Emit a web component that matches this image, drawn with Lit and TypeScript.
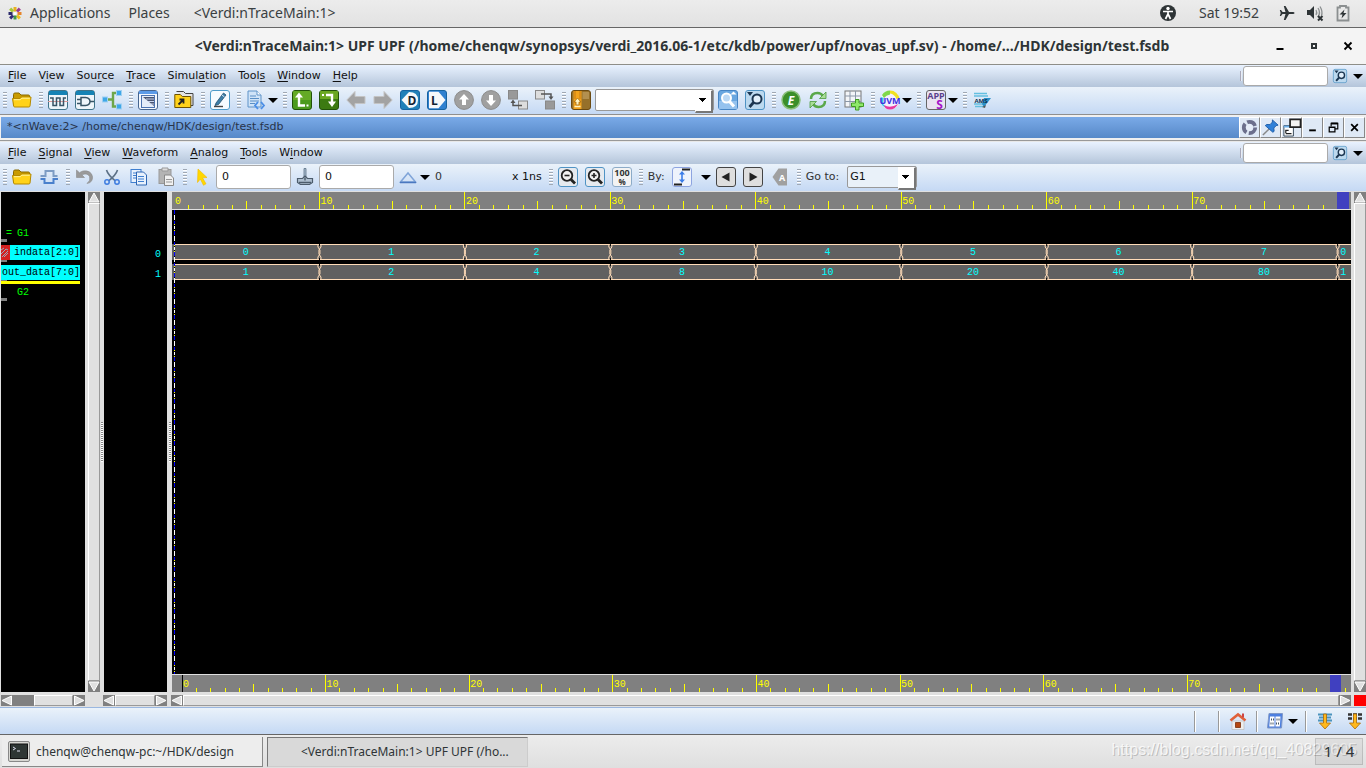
import { LitElement, html, svg, css, nothing, SVGTemplateResult, TemplateResult } from "lit";
import { customElement, property } from "lit/decorators.js";

const tile = (fill: string, stroke: string) =>
  svg`<rect x="0.5" y="0.5" width="19" height="19" rx="2.5" fill=${fill} stroke=${stroke}/>`;

const ICONS: Record<string, SVGTemplateResult> = {
  folder: svg`<path d="M1.5 4.5q0-1.5 1.5-1.5h4l2 2h7.500q1 0 1 1v9h-16z" fill="#c99b00" stroke="#8a6a00"/><path d="M.5 8.500h7.500l1.500-1.500h9.500l-1 9q-.2 1-1.200 1h-14q-1 0-1.200-1z" fill="#ffd21a" stroke="#b58900"/><path d="M2 9.700h6.300l1.500-1.500h8" stroke="#fff2a0" fill="none"/>`,
  wave: svg`${tile("#eef5fa", "#3f7389")}<path d="M1 1h18v4h-18z" fill="#1583b5"/><path d="M0 11.500h20" stroke="#d99"/><path d="M2 8h3v7.500h3.500v-7.500h3.500v7.500h3.500v-7.500h2.500" fill="none" stroke="#375466" stroke-width="1.500"/>`,
  gate: svg`${tile("#eef5fa", "#3f7389")}<path d="M1 1h18v4h-18z" fill="#1583b5"/><path d="M6 7.500h4.500q4.500.5 4.500 4t-4.500 4h-4.500zM2 9.500h4M2 13.500h4M15 11.500h4" fill="none" stroke="#375466" stroke-width="1.500"/>`,
  tree: svg`<path d="M6 9.500h5M16 3h-5v13.500h5" fill="none" stroke="#6ea64a" stroke-width="2.400"/><g fill="#3ea7e8" stroke="#9fd0f2"><rect x=".5" y="7" width="5" height="5"/><rect x="14.500" y=".5" width="5" height="5"/><rect x="14.500" y="14" width="5" height="5"/></g>`,
  schema: svg`${tile("#f5f8fd", "#46658f")}<path d="M1 1h18v3h-18z" fill="#5c9be8"/><rect x="3.500" y="5.500" width="13" height="12" fill="#e4ecf8" stroke="#4c73b0"/><path d="M5 7h11v9z" fill="#4a5570"/><path d="M8 9h8M10 11.500h6M12.500 14h3.500" stroke="#c8d4ee"/>`,
  folderGo: svg`<path d="M2.500 1.500h7l2 2h7.500v12h-2" fill="#e4e4e4" stroke="#444"/><path d="M.8 4.500h5.500l2 2h8.500v11h-16z" fill="#ffd21a" stroke="#6e5200"/><path d="M4.500 14.500l4-4M5.500 9.500h4v4" fill="none" stroke="#222" stroke-width="1.800"/>`,
  edit: svg`${tile("#f7fbff", "#4f9bc9")}<path d="M6 13l7.500-10 2.500 2-7.500 9.500-3.500 1z" fill="#3d7ea8" stroke="#24516f" stroke-width=".8"/><path d="M12 5l2.500 2" stroke="#dceaf5"/><path d="M4 16.500h9" stroke="#444" stroke-width="1.400"/>`,
  doc: svg`<path d="M2 1h9l4 4v12h-13z" fill="#cfe3f8" stroke="#5f93c8"/><path d="M11 1v4h4" fill="#fff" stroke="#5f93c8"/><path d="M4 6h6M4 8.500h9M4 11h9M4 13.500h5" stroke="#5a8fc6"/><path d="M12 12l-3 3.500 3 3.500M15 12l3 3.500-3 3.500" fill="none" stroke="#4b8ee6" stroke-width="1.800"/>`,
  upLevel: svg`${tile("#4b9a1c", "#22520a")}<path d="M1 1h18v9h-18z" fill="#74b52c" opacity=".6"/><path d="M7 5v10.500h6" fill="none" stroke="#fff" stroke-width="2.400"/><path d="M3 7.500l4-5 4 5z" fill="#fff"/><path d="M14.500 14.500h2v2h-2z" fill="#fff"/>`,
  downLevel: svg`${tile("#3c7a12", "#22520a")}<path d="M1 1h18v8h-18z" fill="#7dba2a" opacity=".7"/><path d="M7 5h6v8" fill="none" stroke="#fff" stroke-width="2.400"/><path d="M9 11.500h8l-4 5.500z" fill="#fff"/><path d="M3 4h2v2h-2z" fill="#fff"/>`,
  back: svg`<path d="M.8 10l8.200-8.500v5h10v7h-10v5z" fill="#a3a3a3" stroke="#c4c4c4"/>`,
  forward: svg`<path d="M19.200 10l-8.200-8.500v5h-10v7h10v5z" fill="#a3a3a3" stroke="#c4c4c4"/>`,
  driver: svg`${tile("#2180b8", "#1763a0")}<path d="M1.500 10l7.500-8q9 0 9 8t-9 8z" fill="#f6f8fa"/><text class="glyph" x="12" y="14.500" font-size="12" fill="#123">D</text>`,
  load: svg`${tile("#2f80d0", "#1763a0")}<path d="M2 1.800h9.500l7 8.200-7 8.200h-9.500z" fill="#f6f8fa"/><text class="glyph" x="7.500" y="14.500" font-size="12" fill="#123">L</text>`,
  circleUp: svg`<circle cx="10" cy="10" r="9.400" fill="#a0a0a0" stroke="#8c8c8c"/><path d="M10 4l5 5.500h-3v5.500h-4v-5.500h-3z" fill="#fff"/>`,
  circleDown: svg`<circle cx="10" cy="10" r="9.400" fill="#a0a0a0" stroke="#8c8c8c"/><path d="M10 16l5-5.500h-3v-5.500h-4v5.500h-3z" fill="#fff"/>`,
  boxUp: svg`<rect x=".5" y=".5" width="9" height="8.500" fill="#999" stroke="#888"/><rect x="10.500" y="11" width="9" height="8" fill="#ddd" stroke="#888"/><path d="M14 15.500h-9v-3" fill="none" stroke="#555" stroke-width="1.500"/><path d="M2.500 13l2.500-3.500 2.500 3.500z" fill="#555"/>`,
  boxDown: svg`<rect x=".5" y=".5" width="9" height="8.500" fill="#ddd" stroke="#888"/><rect x="10.500" y="11" width="9" height="8" fill="#999" stroke="#888"/><path d="M6 4h10v3" fill="none" stroke="#555" stroke-width="1.500"/><path d="M13.500 6.500l2.500 3.500 2.500-3.500z" fill="#555"/>`,
  bookmark: svg`${tile("#96702a", "#6b4a12")}<path d="M2.500 1h8v18h-8z" fill="#f2a21c"/><path d="M4 1v8M9 1v8" stroke="#c87a10"/><path d="M11.500 2h6.500v7h-6.500z" fill="#b3904f"/><path d="M6.500 8l3.500 4h-2v3h-3v-3h-2z" fill="#fff3c0" stroke="#a86808" stroke-width=".8"/><path d="M3.500 16.500h6" stroke="#fff3c0" stroke-width="1.500"/>`,
  find: svg`${tile("#6aa7e0", "#4785c4")}<path d="M1 11h18v8h-18z" fill="#a8cdf3" opacity=".7"/><circle cx="8.500" cy="8" r="4.500" fill="#bcd9f5" stroke="#fff" stroke-width="2"/><path d="M11.500 11.500l4.500 5" stroke="#fff" stroke-width="3"/><path d="M12.500 4.500l3-3 3 3z" fill="#fff"/>`,
  findNext: svg`${tile("#bcd9ef", "#4f93c4")}<circle cx="12" cy="9" r="4.500" fill="#e2effa" stroke="#1b3550" stroke-width="2"/><path d="M8.500 12.500l-4 4.500" stroke="#1b3550" stroke-width="2.800"/><path d="M2 2h6l-3 4z" fill="#1b3550"/>`,
  eGreen: svg`<circle cx="10" cy="10" r="9" fill="#3b8f2a" stroke="#8bbf7c" stroke-width="1.500"/><text class="glyph" x="10" y="14.500" font-size="12" font-style="italic" fill="#fff">E</text>`,
  refresh: svg`<path d="M3 9q0-6 6.500-6 3.500 0 5.500 3M17 11q0 6-6.500 6-3.500 0-5.500-3" fill="none" stroke="#5aa84a" stroke-width="2.500"/><path d="M18 2v6.500h-6.500zM2 18v-6.500h6.500z" fill="#a9dd98" stroke="#4d9a3f" stroke-width=".8"/>`,
  gridAdd: svg`<rect x="1" y="1" width="16" height="16" fill="#f3f5f8" stroke="#777"/><path d="M6 1v16M11.500 1v16M1 6h16M1 11.500h16" stroke="#8b97a8"/><path d="M11.500 9.500h3.500v3.500h4.500v3.500h-4.500v3.500h-3.500v-3.500h-4v-3.500h4z" fill="#8fe86a" stroke="#3f9a22"/>`,
  uvm: svg`<circle cx="10" cy="10" r="9.500" fill="#f4f0ff"/><path d="M10 .5a9.500 9.500 0 0 1 9.500 8.500h-3q-2-5-6.500-5.500z" fill="#f0e020"/><path d="M2 5a9.500 9.500 0 0 1 8-4.500v4q-4 .5-6 3.500z" fill="#7fd84a"/><path d="M.7 7l3 1-.5 6 3 4q-5-2-5.700-7z" fill="#30c8e8"/><path d="M4 15q6 4 14-1-3 5.500-8 5.500t-6-4.500z" fill="#e838a0"/><text class="glyph" x="10" y="13.500" font-size="9" fill="#4030e0">UVM</text>`,
  apps: svg`${tile("#e9e4f1", "#666")}<text class="glyph" x="10" y="9" font-size="9" fill="#5a3f8c">APP</text><text class="glyph" x="13.500" y="18.500" font-size="12" fill="#a414c8">S</text>`,
  amd: svg`<path d="M2 3.500h13M2 6h14M2 14h11M3 16.500h9" stroke="#63bfe0" stroke-width="1.600"/><path d="M12 8h7l-7 9-2-3z" fill="#2a90c8"/><text class="glyph" x="9" y="12.500" font-size="6" fill="#103050">AMS</text><path d="M10 17l4-2-1 3z" fill="#555"/>`,
  bus: svg`<path d="M1.500 9h5v-5h8v5h4" fill="none" stroke="#7d9cc4" stroke-width="2"/><path d="M1.500 12h4v4h9v-4h4.500" fill="none" stroke="#4a80cc" stroke-width="2"/>`,
  undo: svg`<path d="M1.500 3v7.500h8l-2.700-2.700q6-2.300 7.700 1.700 1.500 4-2.500 7 6-1 5.500-7-1.500-6.500-9.500-5.500-2 .5-3.500 1.800z" fill="#9a9a9a" stroke="#8a8a8a" stroke-width=".6"/>`,
  cut: svg`<path d="M4.500 3q1.500 5 9 11M15.500 3q-1.500 5-9 11" fill="none" stroke="#5b7086" stroke-width="1.600"/><circle cx="5" cy="15" r="2.200" fill="none" stroke="#3f7de0" stroke-width="1.500"/><circle cx="15" cy="15" r="2.200" fill="none" stroke="#3f7de0" stroke-width="1.500"/>`,
  copy: svg`<rect x="2" y="2.500" width="10" height="13" fill="#e8f1fc" stroke="#3f7fd0"/><path d="M4 6h5M4 8.500h4M4 11h4" stroke="#3f7fd0"/><path d="M7.500 5h7l3 3v10h-10z" fill="#e8f1fc" stroke="#2f67b4"/><path d="M9 9.500h6M9 12h6M9 14.500h6" stroke="#3f7fd0"/>`,
  paste: svg`<rect x="3" y="2.500" width="12" height="14" fill="#b4b4b4" stroke="#999"/><path d="M6 1h6v3h-6z" fill="#ddd" stroke="#999"/><path d="M8.500 8h6l3 3v7.500h-9z" fill="#f1f1f1" stroke="#888"/><path d="M10 12.500h6M10 15h6" stroke="#999"/>`,
  pointer: svg`<path d="M6 2l9 8.500-4.500.3 3.500 6-2.500 1.500-3.200-6.300-2.800 3.500z" fill="#ffd800" stroke="#f4b800" stroke-width=".6"/>`,
  stamp: svg`<path d="M9 1.500h2v8.500h-2z" fill="#a9bdd0" stroke="#5d7286" stroke-width=".8"/><path d="M2.500 11.500h5l2.500-2.500 2.500 2.500h5v4l-3 2h-9l-3-2z" fill="#aebfd0" stroke="#4c5c6c" stroke-width="1.200"/><path d="M10 10.500v3M4 15.500h12" stroke="#4c5c6c" stroke-width="1.400"/>`,
  delta: svg`<path d="M2.500 15l7.500-9 7.500 9z" fill="none" stroke="#7fa4d8" stroke-width="1.500"/><path d="M2 15.500h16" stroke="#4a78c0" stroke-width="1.500"/>`,
  zoomOut: svg`${tile("#e6eaef", "#4f93c4")}<circle cx="9" cy="8.500" r="5.300" fill="#f3f3f3" stroke="#222" stroke-width="1.800"/><path d="M13 12.500l4 4" stroke="#222" stroke-width="2.800"/><path d="M6.500 8.500h5" stroke="#222" stroke-width="1.600"/>`,
  zoomIn: svg`${tile("#e6eaef", "#4f93c4")}<circle cx="9" cy="8.500" r="5.300" fill="#f3f3f3" stroke="#222" stroke-width="1.800"/><path d="M13 12.500l4 4" stroke="#222" stroke-width="2.800"/><path d="M6.500 8.500h5M9 6v5" stroke="#222" stroke-width="1.600"/>`,
  zoomFull: svg`${tile("#f3f3f3", "#8cabc8")}<text class="glyph" x="10" y="9" font-size="9" fill="#333">100</text><text class="glyph" x="10" y="18" font-size="8" fill="#333">%</text>`,
  edge: svg`${tile("#eef3fc", "#8da4e0")}<path d="M10 2.500h8M2 17.500h8" stroke="#222" stroke-width="1.800"/><path d="M10 5.500v9" stroke="#3b7de8" stroke-width="1.600"/><path d="M7 7.500l3-3.500 3 3.500zM7 12.500l3 3.500 3-3.500z" fill="#3b7de8"/>`,
  prev: svg`${tile("#dedede", "#444")}<path d="M13.500 5.500v9l-8-4.500z" fill="#222"/>`,
  next: svg`${tile("#dedede", "#444")}<path d="M6.500 5.500v9l8-4.500z" fill="#222"/>`,
  tagA: svg`<path d="M2.500 10l6-8.500h8.500v17h-8.500z" fill="#a0a0a0"/><text class="glyph" x="12" y="13.500" font-size="9" fill="#fff">A</text>`,
  gear: svg`<circle cx="10" cy="10" r="6" fill="none" stroke="#6c6f8c" stroke-width="4" stroke-dasharray="10 2.500"/><circle cx="10" cy="10" r="3.500" fill="#e6edf8"/>`,
  pin: svg`<path d="M2 18l6.500-6.500" stroke="#888" stroke-width="1.500"/><path d="M12 2l6 5.500-2 .5-2.500 2.500.3 3.500-1.300 1-8-7 1.500-1.200 3.500.2 2.500-2.700z" fill="#2f80d8" stroke="#1c5ca8"/>`,
  undock: svg`<path d="M2 8h10v11h-10z" fill="#fff" stroke="#345"/><path d="M2 8h10v2h-10z" fill="#6aaeea"/><path d="M8.500 1.500h11v8h-11z" fill="#f2f2f2" stroke="#222" stroke-width="1.800"/><path d="M4 16v-3h3M4 16.500h6" fill="none" stroke="#222" stroke-width="1.300"/>`,
  min: svg`<path d="M6.500 13h7" stroke="#000" stroke-width="2"/>`,
  restore: svg`<path d="M7.500 9v-3.500h7v6h-3" fill="none" stroke="#000" stroke-width="1.200"/><path d="M7.500 5.800h7" stroke="#000" stroke-width="2"/><path d="M5.500 9.500h6v5h-6zM5.500 10h6" fill="none" stroke="#000" stroke-width="1.300"/>`,
  close: svg`<path d="M6.500 6.500l7 7M13.500 6.500l-7 7" stroke="#000" stroke-width="1.800"/>`,
  wmMax: svg`<path d="M8 8h4v4h-4z" fill="none" stroke="#2e3436" stroke-width="2"/>`,
  home: svg`<path d="M4 10h12v8.500h-12z" fill="#eee" stroke="#bbb" stroke-width=".7"/><path d="M2.500 9.500l7.500-6 7.500 6" fill="none" stroke="#e0613a" stroke-width="2.600"/><path d="M14 2.500h2v4h-2z" fill="#c44"/><path d="M7.500 11.500h5v5h-5z" fill="#b5460f" stroke="#7a2e08" stroke-width=".8"/>`,
  layout: svg`<path d="M4 2.500h13.500l-1 14.500h-14z" fill="#4c7fe0" stroke="#7f98c8"/><path d="M5 5.500h10.500l-.7 10h-10.500z" fill="#fff"/><path d="M10 5v11" stroke="#4c7fe0"/><path d="M6 8.500h3M5.500 12.500h3M11.500 8.500h3M11 12.500h3" stroke="#456" stroke-width="2" stroke-dasharray="1 1"/>`,
  flowA: svg`<path d="M3 3.500h14M4 6.500h12M3 9.500h14" stroke="#4b93bd" stroke-width="1.800"/><path d="M8.500 3h3v9h4l-5.500 6-5.500-6h4z" fill="#ffb81c" stroke="#a86a08" stroke-width=".8"/>`,
  flowB: svg`<path d="M3 3.500h14M3 7.500h14" stroke="#333" stroke-width="2.500" stroke-dasharray="4 1"/><path d="M8.500 3h3v9h4l-5.500 6-5.500-6h4z" fill="#ffb81c" stroke="#a86a08" stroke-width=".8"/>`,
  distro: svg`<g stroke-width="3" stroke-linecap="square"><path d="M10 7V5.500" stroke="#e8b020"/><path d="M13 7.500l.8-.8" stroke="#9a3b8c"/><path d="M14 10.500h1" stroke="#e6842a"/><path d="M13 13.500l.8.8" stroke="#e8c020"/><path d="M10 14v1" stroke="#3f9a4a"/><path d="M7 13.500l-.8.8" stroke="#332b78"/><path d="M6 10.500h-1" stroke="#2b2a6c"/><path d="M7 7.500l-.8-.8" stroke="#a6c83a"/></g><circle cx="10" cy="10.500" r="1.500" fill="#fff"/>`,
  access: svg`<circle cx="10" cy="10" r="8" fill="#2e3436"/><circle cx="10" cy="5.500" r="1.700" fill="#fff"/><path d="M5 8.500h10M10 8v4M10 11l-2.500 5M10 11l2.500 5" stroke="#fff" stroke-width="1.700" fill="none"/>`,
  plane: svg`<path d="M17.500 10q0-1-1.500-1h-4l-3.500-6h-1.700l1.700 6h-3l-1.500-2h-1.200l.9 3-.9 3h1.200l1.500-2h3l-1.700 6h1.700l3.500-6h4q1.500 0 1.500-1z" fill="#2e3436"/>`,
  mute: svg`<path d="M2 7h3l4-4v13l-4-4h-3z" fill="#2e3436"/><path d="M11 7q1.500 2.500 0 5M13 5q3 4.500 0 9M15 3.500q3 5 1.500 9" fill="none" stroke="#8b8f90" stroke-width="1.300"/><path d="M13 13l4.500 4.500M17.500 13l-4.500 4.500" stroke="#2e3436" stroke-width="2"/>`,
  battery: svg`<path d="M4.500 4.500h2.500v-1.500h6v1.500h2.500v13h-11z" fill="none" stroke="#8b8f90" stroke-width="1.800"/><path d="M11.500 6.500l-5 5h3l-1 4 5-5.500h-3z" fill="#2e3436"/>`,
  terminal: svg`<rect x="-.5" y="-.5" width="21" height="20" rx="1.500" fill="#d6d6d2" stroke="#888"/><rect x="1.500" y="2" width="17" height="14.500" fill="#2e3634" stroke="#111"/><path d="M4 5l2.500 1.500-2.500 1.500M8 9h3" fill="none" stroke="#dde" stroke-width="1"/>`,
};

const icon = (name: string) =>
  html`<svg class="ic" viewBox="0 0 20 20" aria-hidden="true">${ICONS[name]}</svg>`;

const sharedStyles = css`
  :host { display: block; font: 11px/14px "DejaVu Sans", sans-serif; color: #111; }
  * { box-sizing: border-box; }
  button { border: 0; padding: 0; margin: 0; background: none; font: inherit; color: inherit; flex: none; display: block; }
  svg { display: block; overflow: visible; }
  .ic { width: 20px; height: 20px; flex: none; }
  .ic.small { width: 14px; height: 14px; }
  .glyph { font-family: "Open Sans", sans-serif; font-weight: 700; text-anchor: middle; }
  .caret { width: 10px; height: 20px; margin: 0 -2px 0 -5px; display: flex; align-items: center; }
  .caret::before { content: ""; border: 5px solid transparent; border-top-color: #000; border-bottom: 0; }
`;

type Item = string | TemplateResult;

@customElement("nw-toolbar")
class NwToolbar extends LitElement {
  @property({ attribute: false }) items: Item[] = [];
  static styles = [sharedStyles, css`
    :host { background: linear-gradient(#eaf2fa, #c5d9f4); }
    .bar { display: flex; align-items: center; gap: 7px; height: 27px; padding: 0 0 1px 3px; }
    .grip { width: 4px; height: 16px; margin-right: -2px; flex: none; background: repeating-linear-gradient(#9fa8b4 0 1px, #fff 1px 2px, transparent 2px 3px); }
    .combo { position: relative; display: block; height: 22px; flex: none; }
    .combo select { appearance: none; width: 100%; height: 100%; border: 1px solid #999; border-radius: 2px; background: #fff; font: inherit; padding: 0 20px 0 2px; margin: 0; color: #111; display: block; }
    .combo.filled select { background: #e9f1f9; }
    .combo::after { content: ""; position: absolute; right: 1px; top: 1px; width: 15px; height: 20px; border: 1px solid #fff; border-right: 2px solid #777; border-bottom: 2px solid #777; pointer-events: none; background: linear-gradient(#000, #000) 3px 7px / 7px 1px no-repeat, linear-gradient(#000, #000) 4px 8px / 5px 1px no-repeat, linear-gradient(#000, #000) 5px 9px / 3px 1px no-repeat, linear-gradient(#000, #000) 6px 10px / 1px 1px no-repeat, #fff; }
    .wide { width: 119px; margin: 0 -3px; }
    .goto { width: 70px; margin-left: 1px; }
    .field { width: 75px; height: 24px; border: 1px solid #aaa; border-radius: 3px; background: #fff; font: inherit; padding: 0 5px 2px; margin: 0 -3px; color: #111; flex: none; }
    .time { width: 70px; }
    .muted { color: #333; }
  `];
  render() {
    return html`<div class="bar">${this.items.map((it) =>
      typeof it !== "string" ? it
      : it === "|" ? html`<span class="grip"></span>`
      : it === "v" ? html`<button class="caret" aria-label="More options"></button>`
      : html`<button aria-label=${it}>${icon(it)}</button>`)}</div>`;
  }
}

@customElement("nw-menubar")
class NwMenubar extends LitElement {
  @property({ attribute: false }) items: string[] = [];
  static styles = [sharedStyles, css`
    :host { background: linear-gradient(#e9f2ff, #b4c5da); }
    .bar { display: flex; align-items: center; height: 22px; padding: 0 3px 0 8px; }
    .menu { display: flex; gap: 12px; flex: 1; }
    .menu button { min-width: 18px; }
    u { text-underline-offset: 2px; }
    .search { width: 85px; height: 20px; border: 1px solid #aaa; border-radius: 3px; background: #fff; padding: 0 4px; margin: 0 5px 0 0; font: inherit; }
    .tick { width: 2px; height: 10px; background: #e8edf5; border-left: 1px solid #aab; margin-right: 1px; }
    .caret { margin: 0 0 0 6px; }
  `];
  render() {
    return html`<div class="bar">
      <nav class="menu">${this.items.map((m) => {
        const i = m.indexOf("&");
        return html`<button>${m.slice(0, i)}<u>${m[i + 1]}</u>${m.slice(i + 2)}</button>`;
      })}</nav>
      <span class="tick"></span>
      <input class="search" aria-label="Search">
      <button aria-label="Find"><svg class="ic small" viewBox="0 0 20 20">${ICONS.findNext}</svg></button>
      <button class="caret" aria-label="Search options"></button>
    </div>`;
  }
}

@customElement("nw-ruler")
class NwRuler extends LitElement {
  @property({ type: Number }) span = 80;
  static styles = [sharedStyles, css`
    :host { height: 17px; background: #808080; }
    .num { font: 10px "Liberation Mono", monospace; fill: #ff0; }
    .scale { width: 100%; height: 17px; }
    .line { stroke: #ff0; shape-rendering: crispEdges; }
  `];
  render() {
    const ticks = Array.from({ length: Math.floor(this.span) + 1 }, (_, t) => t);
    return html`<svg class="scale">${ticks.map((t) => {
      const x = `${(t / this.span) * 100}%`;
      const top = t % 10 === 0 ? 0 : t % 5 === 0 ? 9 : 13;
      return svg`<line class="line" x1=${x} x2=${x} y1=${t ? top : 17} y2="17"/>
        ${t % 10 === 0 && t < 80 ? svg`<text class="num" x=${x} dx="1" y="12">${t}</text>` : nothing}`;
    })}</svg>`;
  }
}

@customElement("nw-bus")
class NwBus extends LitElement {
  @property({ attribute: false }) values: string[] = [];
  @property({ type: Number }) span = 80;
  static styles = [sharedStyles, css`
    .bus { width: 100%; height: 16px; }
    .fill { fill: #606060; }
    .rail { stroke: #ffdcb8; shape-rendering: crispEdges; }
    .gap { fill: #000; }
    .edge { stroke: #ffdcb8; fill: none; }
    .val { font: 10px "Liberation Mono", monospace; fill: #0ff; text-anchor: middle; }
  `];
  render() {
    const pct = (t: number) => `${(t / this.span) * 100}%`;
    return html`<svg class="bus">
      <rect class="fill" x="-2" width="100%" height="16"/>
      <rect class="fill" width="100%" height="16"/>
      <line class="rail" x1="0" x2="100%" y1=".5" y2=".5"/>
      <line class="rail" x1="0" x2="100%" y1="15.500" y2="15.500"/>
      ${this.values.map((v, i) => {
        const end = Math.min((i + 1) * 10, this.span);
        return svg`${i ? svg`<svg x=${pct(i * 10)}><rect class="gap" x="-.5" width="1" height="2"/><rect class="gap" x="-.5" y="14" width="1" height="2"/><path class="edge" d="M-1.500 0v3l2 3v4l-2 3v3M1.500 0v3l-2 3v4l2 3v3"/></svg>` : nothing}
          <text class="val" x=${pct((i * 10 + end) / 2)} dx="-1" y="11">${v}</text>`;
      })}
    </svg>`;
  }
}

@customElement("nw-scrollbar")
class NwScrollbar extends LitElement {
  @property({ type: Boolean, reflect: true }) vertical = false;
  @property({ type: Number }) offset = 0;
  static styles = [sharedStyles, css`
    :host { background: #808080; display: flex; height: 11px; }
    :host([vertical]) { flex-direction: column; height: auto; width: 12px; }
    .arrow { width: 12px; height: 11px; }
    .thumb { flex: 1; background: #e0e0e0; border: 1px solid #fff; border-right-color: #999; border-bottom-color: #999; }
    .tri { fill: #e0e0e0; stroke: #fff; }
    .pad { flex: none; }
  `];
  render() {
    const arrow = (label: string, d: string) => html`<button class="arrow" aria-label=${label}><svg width="12" height="11" viewBox="0 0 12 11"><path class="tri" d=${d}/></svg></button>`;
    return this.vertical
      ? html`${arrow("Up", "M1 10h10l-5-9z")}<div class="thumb"></div>${arrow("Down", "M1 1h10l-5 9z")}`
      : html`${arrow("Left", "M10.500 1v9l-9.500-4.500z")}<div class="pad" style="width:${this.offset}px"></div><div class="thumb"></div>${arrow("Right", "M1.500 1v9l9.500-4.500z")}`;
  }
}

@customElement("app-root")
class AppRoot extends LitElement {
  static styles = [sharedStyles, css`
    :host { display: flex; flex-direction: column; height: 100vh; background: #e0e0e0; overflow: hidden; position: relative; }
    .top { height: 28px; display: flex; align-items: center; padding: 0 13px 2px 5px; background: linear-gradient(#ececec, #e2e2e2); border-bottom: 1px solid #666; font: 14px/20px "Noto Sans", sans-serif; color: #3a4042; flex: none; }
    .apps { display: flex; align-items: center; gap: 5px; margin-right: 18px; }
    .places { margin-right: 24px; }
    .push { flex: 1; }
    .tray { display: flex; align-items: center; gap: 8px; }
    .clock { margin: 0 10px 0 13px; }
    .caption { height: 37px; display: flex; align-items: center; background: #f4f4f4; border-bottom: 1px solid #8e8e88; padding-right: 8px; flex: none; }
    .caption h1 { flex: 1; margin: 0; padding-left: 94px; font: 700 14px/20px "Noto Sans", sans-serif; color: #2e3436; text-align: center; white-space: nowrap; }
    .wm { display: flex; gap: 14px; }
    nw-menubar, nw-toolbar { flex: none; }
    .main-tools { border-bottom: 1px solid #8f8f8f; }
    .sub { height: 26px; padding: 2px 1px 3px 1px; background: #f0f0f0; display: flex; flex: none; box-shadow: inset 0 -1px #999; }
    .sub-title { flex: 1; background: linear-gradient(#7aaae8, #5789c8); padding: 3px 6px; color: #28344a; }
    .sub-btns { display: flex; }
    .sub-btns button { width: 21px; height: 21px; border: 1px solid #fff; border-right-color: #888; border-bottom-color: #888; background: #dfe9f6; }
    .sub-btns .ic { width: 19px; height: 19px; }
    .sub-menu { border-top: 1px solid #e8e8e8; }
    .work { flex: 1; min-height: 0; margin-top: 1px; display: grid; grid-template: minmax(0, 1fr) 11px / 84px 3px 12px 4px 63px 5px minmax(0, 1fr) 3px 12px; row-gap: 3px; padding: 0 0 1px 1px; }
    .names { grid-column: 1; background: #000; padding-top: 31px; font: 10px/14px "Liberation Mono", monospace; color: #0f0; overflow: hidden; }
    .row { height: 20px; display: flex; align-items: center; padding-bottom: 1px; background: linear-gradient(#808080, #808080) 0 16px / 6px 3px no-repeat; }
    .group { padding-left: 16px; padding-bottom: 2px; background-position: 0 14px; }
    .open { padding: 1px 0 0 5px; gap: 5px; }
    .sig { background: #0ff; color: #000; height: 15px; line-height: 15px; width: 79px; display: flex; justify-content: flex-end; }
    .flag { width: 9px; height: 15px; margin-right: auto; flex: none; }
    .active { border-bottom: 3px solid #ff0; width: 79px; height: 21px; padding-bottom: 0; background-position: 0 15px; }
    .grip { align-self: center; justify-self: center; width: 2px; height: 40px; background: repeating-linear-gradient(#888 0 1px, #fff 1px 2px); }
    .values { background: #000; color: #0ff; padding: 53px 6px 0 0; font: 10px/20px "Liberation Mono", monospace; text-align: right; }
    .canvas { background: #000; display: flex; flex-direction: column; position: relative; min-width: 0; overflow: hidden; }
    .rule { background: #808080; padding-left: 2px; border-bottom: 1px solid #e0e0e0; position: relative; }
    .rule.full { padding-left: 10px; border-bottom: 0; border-top: 1px solid #e0e0e0; background: linear-gradient(#000, #000) 10px 0 / 1px 100% no-repeat #808080; }
    .rule nw-ruler { background: none; }
    .knob { position: absolute; top: 0; right: 2px; width: 12px; height: 17px; background: #4040c0; }
    .full .knob { right: 10px; width: 11px; }
    .buses { flex: 1; padding: 34px 0 0 2px; display: flex; flex-direction: column; gap: 4px; }
    .cursor { position: absolute; left: 2px; top: 18px; bottom: 18px; width: 1px; background: repeating-linear-gradient(#00f 0 4px, #000 4px 5px, #fff 5px 10px, #000 10px 11px, #00f 11px 14px, #ff0 14px 15px, #000 15px 16px, #fff 16px 19px, #000 19px 20px, #ff0 20px 21px); }
    .corner { grid-column: 9; background: #f00; }
    .names-bar { grid-column: 1; }
    .vals-bar { grid-column: 4 / 6; margin-left: 3px; }
    .wave-bar { grid-column: 7; margin-left: -1px; }
    .status { height: 28px; border-top: 1px solid #9ab7e0; border-bottom: 1px solid #666; background: linear-gradient(#eaf2fa, #c5d9f4); display: flex; align-items: center; justify-content: flex-end; padding-right: 1px; flex: none; }
    .div { width: 2px; height: 21px; border-left: 1px solid #999; background: #fff; }
    .cell { padding: 0 8px; display: flex; gap: 10px; }
    .empty { width: 22px; }
    .cell.pick { padding: 0 7px; gap: 7px; }
    .cell.tail { padding: 0 0 0 8px; }
    .pick .caret { margin: 0 0 0 -4px; }
    .tasks { height: 33px; display: flex; gap: 4px; padding: 2px 3px 0 2px; background: linear-gradient(#ececec, #dfdfdf); flex: none; align-items: flex-start; }
    .task { width: 261px; height: 30px; display: flex; align-items: center; gap: 7px; padding-left: 7px; background: #ededed; border-right: 1px solid #888; border-bottom: 1px solid #888; font: 12px/20px "Noto Sans", sans-serif; color: #2e3436; }
    .task.on { background: #d9d9d9; border: 1px solid #777; border-right-color: #ccc; border-bottom-color: #ccc; padding-left: 33px; }
    .pages { margin: 1px 0 0 auto; width: 48px; height: 27px; border: 1px solid rgba(0, 0, 0, 0.12); background: rgba(0, 0, 0, 0.05); font: 15px/25px "Noto Sans", sans-serif; text-align: center; color: #2e3436; position: relative; z-index: 1; }
    .mark { position: absolute; right: 9px; bottom: 8px; font: 16px/20px "Liberation Sans", sans-serif; color: rgba(255, 255, 255, 0.75); text-shadow: 1px 1px rgba(150, 150, 150, 0.5); pointer-events: none; }
  `];

  render() {
    return html`
      <header class="top">
        <button class="apps">${icon("distro")}Applications</button>
        <button class="places">Places</button>
        <button>&lt;Verdi:nTraceMain:1&gt;</button>
        <span class="push"></span>
        <div class="tray">${icon("access")}<span class="clock">Sat 19:52</span>${icon("plane")}${icon("mute")}${icon("battery")}</div>
      </header>
      <div class="caption">
        <h1>&lt;Verdi:nTraceMain:1&gt; UPF UPF (/home/chenqw/synopsys/verdi_2016.06-1/etc/kdb/power/upf/novas_upf.sv) - /home/.../HDK/design/test.fsdb</h1>
        <div class="wm"><button aria-label="Minimize">${icon("min")}</button><button aria-label="Maximize">${icon("wmMax")}</button><button aria-label="Close">${icon("close")}</button></div>
      </div>
      <nw-menubar .items=${["&File", "V&iew", "Sou&rce", "&Trace", "Simul&ation", "Tool&s", "&Window", "&Help"]}></nw-menubar>
      <nw-toolbar class="main-tools" .items=${["|", "folder", "|", "wave", "gate", "tree", "|", "schema", "|", "folderGo", "|", "edit", "|", "doc", "v", "|",
        "upLevel", "downLevel", "back", "forward", "driver", "load", "circleUp", "circleDown", "boxUp", "boxDown", "|", "bookmark",
        html`<label class="combo wide"><select aria-label="Find text"><option></option></select></label>`,
        "find", "findNext", "|", "eGreen", "refresh", "|", "gridAdd", "|", "uvm", "v", "|", "apps", "v", "|", "amd"]}></nw-toolbar>
      <div class="sub">
        <div class="sub-title">*&lt;nWave:2&gt; /home/chenqw/HDK/design/test.fsdb</div>
        <div class="sub-btns">${["gear", "pin", "undock", "min", "restore", "close"].map((n) => html`<button aria-label=${n}>${icon(n)}</button>`)}</div>
      </div>
      <nw-menubar class="sub-menu" .items=${["&File", "&Signal", "&View", "&Waveform", "&Analog", "&Tools", "W&indow"]}></nw-menubar>
      <nw-toolbar .items=${["|", "folder", "bus", "|", "undo", "cut", "copy", "paste", "|", "pointer",
        html`<input class="field" aria-label="Cursor time" value="0">`, "stamp",
        html`<input class="field" aria-label="Marker time" value="0">`, "delta", "v",
        html`<span class="muted time">0</span>`, html`<span>x 1ns</span>`, "|", "zoomOut", "zoomIn", "zoomFull", "|",
        html`<span class="muted">By:</span>`, "edge", html`<span></span>`, "v", "prev", "next", "tagA", "|",
        html`<span class="muted" id="goto">Go to:</span>`,
        html`<span class="combo filled goto"><select aria-labelledby="goto"><option>G1</option></select></span>`]}></nw-toolbar>
      <main class="work">
        <div class="names">
          <div class="row open"><span>=</span><span>G1</span></div>
          <div class="row"><div class="sig"><svg class="flag" viewBox="0 0 9 15"><rect width="9" height="15" fill="#d42020"/><path d="M0 5l3-2M0 9l5-5 2 1M1 12l6-6M3 12l4-4" stroke="#9ab" fill="none"/></svg>indata[2:0]</div></div>
          <div class="row active"><div class="sig">out_data[7:0]</div></div>
          <div class="row group">G2</div>
        </div>
        <span></span>
        <nw-scrollbar vertical></nw-scrollbar>
        <span class="grip"></span>
        <div class="values"><div>0</div><div>1</div></div>
        <span class="grip"></span>
        <div class="canvas">
          <div class="rule"><nw-ruler .span=${80.92}></nw-ruler><span class="knob"></span></div>
          <div class="buses">
            <nw-bus .span=${80.92} .values=${["0", "1", "2", "3", "4", "5", "6", "7", "0"]}></nw-bus>
            <nw-bus .span=${80.92} .values=${["1", "2", "4", "8", "10", "20", "40", "80", "1"]}></nw-bus>
          </div>
          <div class="rule full"><nw-ruler .span=${81.4}></nw-ruler><span class="knob"></span></div>
          <span class="cursor"></span>
        </div>
        <span></span>
        <nw-scrollbar vertical></nw-scrollbar>
        <nw-scrollbar class="names-bar" .offset=${21}></nw-scrollbar>
        <nw-scrollbar class="vals-bar"></nw-scrollbar>
        <nw-scrollbar class="wave-bar"></nw-scrollbar>
        <span class="corner"></span>
      </main>
      <footer class="status">
        <span class="div"></span><span class="empty"></span><span class="div"></span>
        <span class="cell"><button aria-label="Home">${icon("home")}</button></span><span class="div"></span>
        <span class="cell pick"><button aria-label="Layout">${icon("layout")}</button><button class="caret" aria-label="Layouts"></button></span><span class="div"></span>
        <span class="cell tail"><button aria-label="Step down">${icon("flowA")}</button><button aria-label="Step list">${icon("flowB")}</button></span>
      </footer>
      <div class="tasks">
        <button class="task">${icon("terminal")}chenqw@chenqw-pc:~/HDK/design</button>
        <button class="task on">&lt;Verdi:nTraceMain:1&gt; UPF UPF (/ho...</button>
        <div class="pages">1 / 4</div>
      </div>
      <div class="mark">https://blog.csdn.net/qq_40829605</div>`;
  }
}
